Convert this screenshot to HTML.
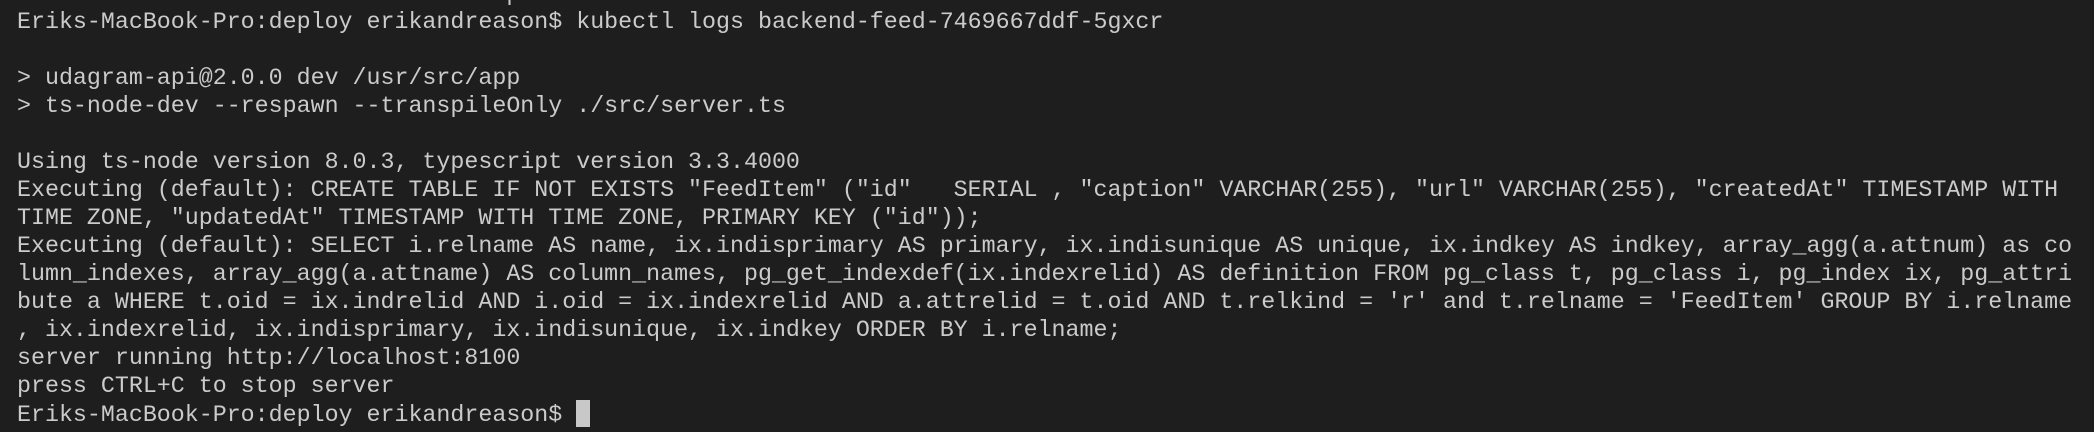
<!DOCTYPE html>
<html><head><meta charset="utf-8"><style>
html,body{margin:0;padding:0;background:#1e1e1e;width:2094px;height:432px;overflow:hidden}
pre{position:absolute;left:17px;top:-20.5px;margin:0;font-family:"Liberation Mono",monospace;font-size:23.3px;line-height:28px;color:#cbcbcb;white-space:pre}
.cur{display:inline-block;width:14px;height:27px;background:#c8c8c8;vertical-align:-6px}
</style></head><body>
<pre>No resources found in default namespace.
Eriks-MacBook-Pro:deploy erikandreason$ kubectl logs backend-feed-7469667ddf-5gxcr

&gt; udagram-api@2.0.0 dev /usr/src/app
&gt; ts-node-dev --respawn --transpileOnly ./src/server.ts

Using ts-node version 8.0.3, typescript version 3.3.4000
Executing (default): CREATE TABLE IF NOT EXISTS "FeedItem" ("id"   SERIAL , "caption" VARCHAR(255), "url" VARCHAR(255), "createdAt" TIMESTAMP WITH
TIME ZONE, "updatedAt" TIMESTAMP WITH TIME ZONE, PRIMARY KEY ("id"));
Executing (default): SELECT i.relname AS name, ix.indisprimary AS primary, ix.indisunique AS unique, ix.indkey AS indkey, array_agg(a.attnum) as co
lumn_indexes, array_agg(a.attname) AS column_names, pg_get_indexdef(ix.indexrelid) AS definition FROM pg_class t, pg_class i, pg_index ix, pg_attri
bute a WHERE t.oid = ix.indrelid AND i.oid = ix.indexrelid AND a.attrelid = t.oid AND t.relkind = 'r' and t.relname = 'FeedItem' GROUP BY i.relname
, ix.indexrelid, ix.indisprimary, ix.indisunique, ix.indkey ORDER BY i.relname;
server running http://localhost:8100
press CTRL+C to stop server
Eriks-MacBook-Pro:deploy erikandreason$ <span class="cur"></span></pre>
</body></html>
